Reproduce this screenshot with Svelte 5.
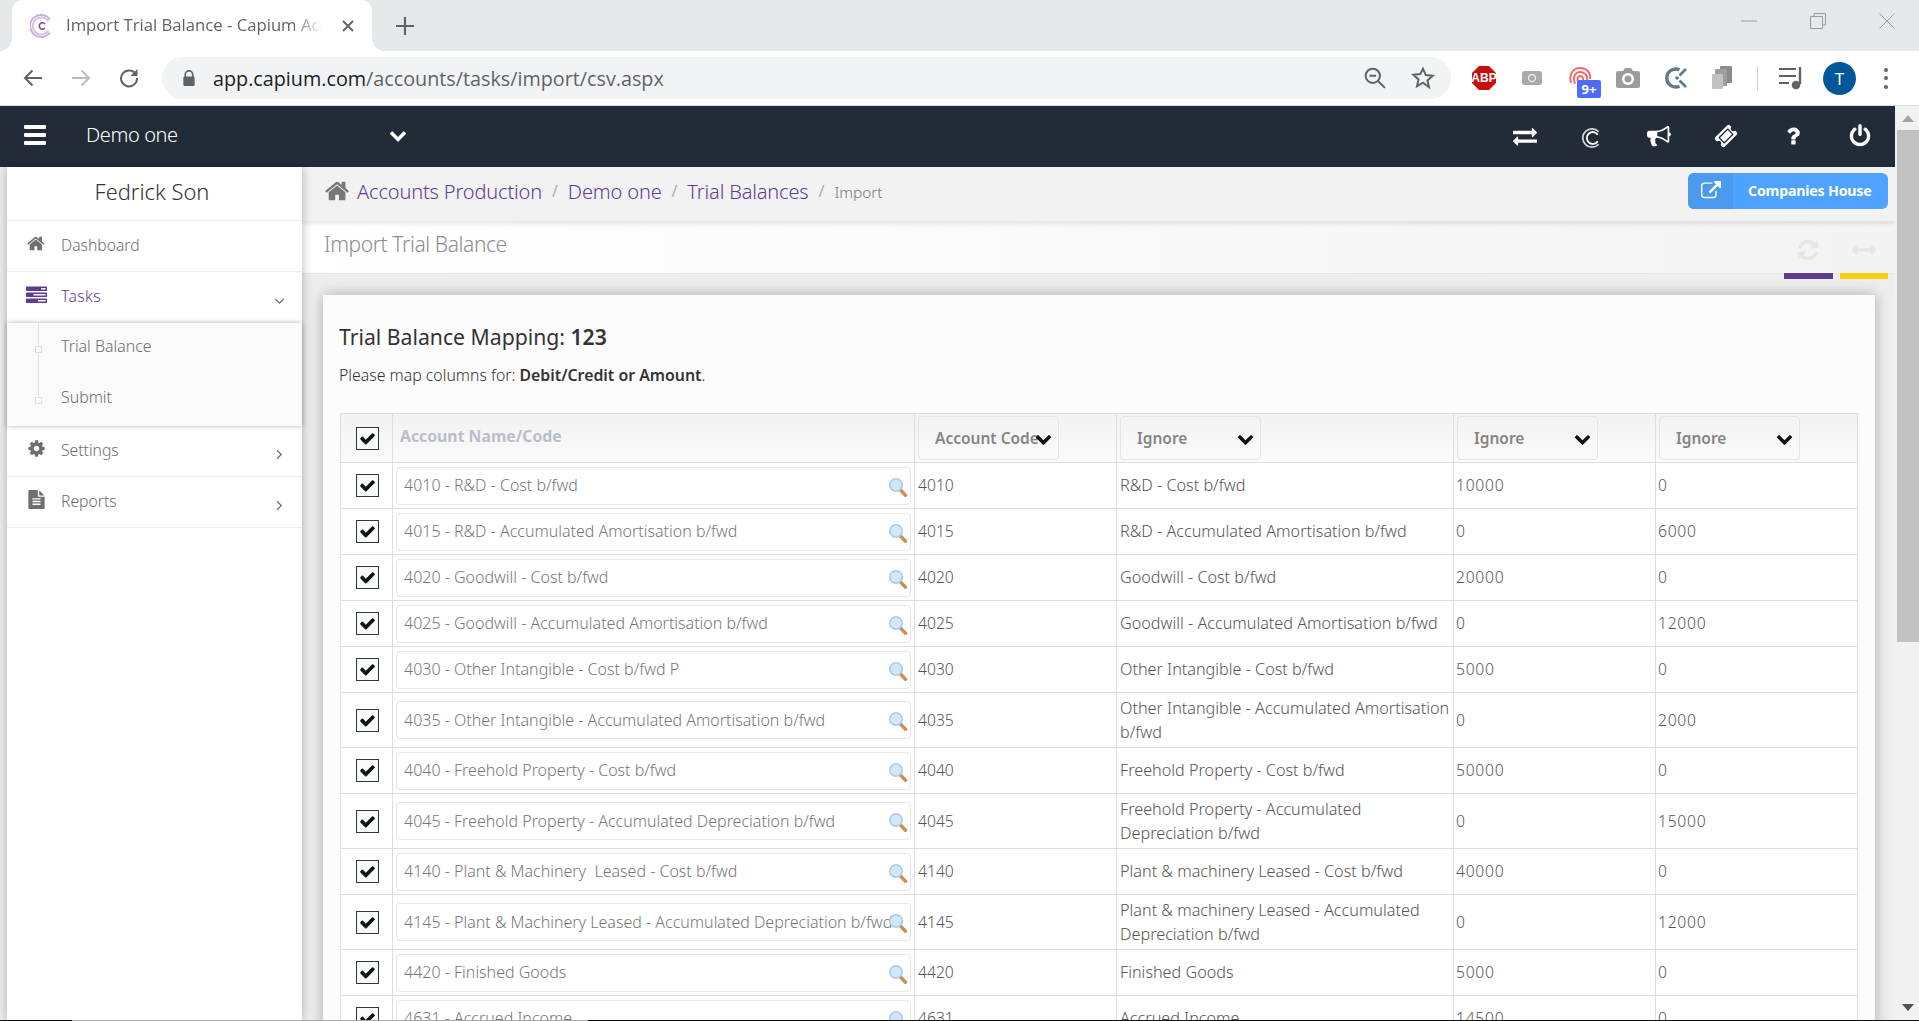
<script>
  const fa = {
    home: "M1408 992v480q0 26-19 45t-45 19h-384v-384h-256v384h-384q-26 0-45-19t-19-45v-480q0-1 .5-3t.5-3l575-474 575 474q1 2 1 6zm223-69l-62 74q-8 9-21 11h-3q-13 0-21-7l-692-577-692 577q-12 8-24 7-13-2-21-11l-62-74q-8-10-7-23.500t11-21.500l719-599q32-26 76-26t76 26l244 204v-195q0-14 9-23t23-9h192q14 0 23 9t9 23v408l219 182q10 8 11 21.500t-7 23.500z",
    cog: "M1152 896q0-106-75-181t-181-75-181 75-75 181 75 181 181 75 181-75 75-181zm512-109v222q0 12-8 23t-20 13l-185 28q-19 54-39 91 35 50 107 138 10 12 10 25t-9 23q-27 37-99 108t-94 71q-12 0-26-9l-138-108q-44 23-91 38-16 136-29 186-7 28-36 28h-222q-14 0-24.500-8.500t-11.500-21.500l-28-184q-49-16-90-37l-141 107q-10 9-25 9-14 0-25-11-126-114-165-168-7-10-7-23 0-12 8-23 15-21 51-66.500t54-70.500q-27-50-41-99l-183-27q-13-2-21-12.500t-8-23.500v-222q0-12 8-23t19-13l186-28q14-46 39-92-40-57-107-138-10-12-10-24 0-10 9-23 26-36 98.500-107.500t94.500-71.500q13 0 26 10l138 107q44-23 91-38 16-136 29-186 7-28 36-28h222q14 0 24.500 8.500t11.500 21.500l28 184q49 16 90 37l142-107q9-9 24-9 13 0 25 10 129 119 165 170 7 8 7 22 0 12-8 23-15 21-51 66.500t-54 70.500q26 50 41 98l183 28q13 2 21 12.500t8 23.500z",
    file: "M1596 476q14 14 28 36h-472v-472q22 14 36 28zm-476 164h544v1056q0 40-28 68t-68 28h-1344q-40 0-68-28t-28-68v-1600q0-40 28-68t68-28h800v544q0 40 28 68t68 28zm160 736v-64q0-14-9-23t-23-9h-704q-14 0-23 9t-9 23v64q0 14 9 23t23 9h704q14 0 23-9t9-23zm0-256v-64q0-14-9-23t-23-9h-704q-14 0-23 9t-9 23v64q0 14 9 23t23 9h704q14 0 23-9t9-23zm0-256v-64q0-14-9-23t-23-9h-704q-14 0-23 9t-9 23v64q0 14 9 23t23 9h704q14 0 23-9t9-23z",
    tasks: "M1024 1408h640v-128h-640v128zm-384-512h1024v-128h-1024v128zm640-512h384v-128h-384v128zm512 832v256q0 26-19 45t-45 19h-1664q-26 0-45-19t-19-45v-256q0-26 19-45t45-19h1664q26 0 45 19t19 45zm0-512v256q0 26-19 45t-45 19h-1664q-26 0-45-19t-19-45v-256q0-26 19-45t45-19h1664q26 0 45 19t19 45zm0-512v256q0 26-19 45t-45 19h-1664q-26 0-45-19t-19-45v-256q0-26 19-45t45-19h1664q26 0 45 19t19 45z",
    exchange: "M1792 1184v192q0 13-9.500 22.500t-22.500 9.500h-1376v192q0 13-9.500 22.500t-22.500 9.500q-12 0-24-10l-319-320q-9-9-9-22 0-14 9-23l320-320q9-9 23-9 13 0 22.500 9.500t9.500 22.500v192h1376q13 0 22.500 9.500t9.500 22.500zm0-544q0 14-9 23l-320 320q-9 9-23 9-13 0-22.500-9.500t-9.500-22.500v-192h-1376q-13 0-22.500-9.500t-9.500-22.500v-192q0-13 9.500-22.500t22.500-9.500h1376v-192q0-14 9-23t23-9q12 0 24 10l319 319q9 9 9 23z",
    bullhorn: "M1664 640q53 0 90.500 37.500t37.500 90.500-37.500 90.500-90.500 37.500v384q0 52-38 90t-90 38q-417-347-812-380-58 19-91 66t-31 100.500 40 92.500q-20 33-23 65.500t6 58 33.500 55 48 50 61.500 50.500q-29 58-111.500 83t-168.500 11.500-132-55.500q-7-23-29.500-87.500t-32-94.500-23-89-15-101 3.500-98.500 22-110.500h-122q-66 0-113-47t-47-113v-192q0-66 47-113t113-47h480q435 0 896-384 52 0 90 38t38 90v384zm-128 604v-954q-394 302-768 343v270q377 42 768 341z",
    ticket: "M1024 452l316 316-572 572-316-316zm-211 979l618-618q19-19 19-45t-19-45l-362-362q-18-18-45-18t-45 18l-618 618q-19 19-19 45t19 45l362 362q18 18 45 18t45-18zm889-637l-907 908q-37 37-90.500 37t-90.500-37l-126-126q56-56 56-136t-56-136-136-56-136 56l-125-126q-37-37-37-90.500t37-90.500l907-906q37-37 90.500-37t90.500 37l125 125q-56 56-56 136t56 136 136 56 136-56l126 125q37 37 37 90.500t-37 90.500z",
    question: "M1088 1256v240q0 16-12 28t-28 12h-240q-16 0-28-12t-12-28v-240q0-16 12-28t28-12h240q16 0 28 12t12 28zm316-600q0 54-15.500 101t-35 76.500-55 59.500-57.500 43.500-61 35.500q-41 23-68.500 65t-27.500 67q0 17-12 32.500t-28 15.500h-240q-15 0-25.500-18.500t-10.500-37.500v-45q0-83 65-156.500t143-108.500q59-27 84-56t25-76q0-42-46.500-74t-107.500-32q-65 0-108 29-35 25-107 115-13 16-31 16-12 0-25-8l-164-125q-13-10-15.500-25t5.500-28q160-266 464-266 80 0 161 31t146 83 106 127.500 41 158.500z",
    power: "M1664 896q0 156-61 298t-164 245-245 164-298 61-298-61-245-164-164-245-61-298q0-182 80.500-343t226.500-270q43-32 95.500-25t83.500 50q32 42 24.500 94.500t-49.500 84.500q-98 74-151.500 181t-53.500 228q0 104 40.500 198.500t109.500 163.500 163.500 109.500 198.500 40.500 198.500-40.500 163.500-109.500 109.500-163.500 40.500-198.500q0-121-53.500-228t-151.500-181q-42-32-49.500-84.500t24.500-94.500q31-43 84-50t95 25q146 109 226.500 270t80.500 343zm-640-768v640q0 52-38 90t-90 38-90-38-38-90v-640q0-52 38-90t90-38 90 38 38 90z",
    external: "M1408 928v320q0 119-84.500 203.500t-203.500 84.500h-832q-119 0-203.500-84.500t-84.500-203.500v-832q0-119 84.500-203.500t203.500-84.500h704q14 0 23 9t9 23v64q0 14-9 23t-23 9h-704q-66 0-113 47t-47 113v832q0 66 47 113t113 47h832q66 0 113-47t47-113v-320q0-14 9-23t23-9h64q14 0 23 9t9 23zm384-864v512q0 26-19 45t-45 19-45-19l-176-176-652 652q-10 10-23 10t-23-10l-114-114q-10-10-10-23t10-23l652-652-176-176q-19-19-19-45t19-45 45-19h512q26 0 45 19t19 45z",
    refresh: "M1639 1056q0 5-1 7-64 268-268 434.500t-478 166.500q-146 0-282.500-55t-243.500-157l-129 129q-19 19-45 19t-45-19-19-45v-448q0-26 19-45t45-19h448q26 0 45 19t19 45-19 45l-137 137q71 66 161 102t187 36q134 0 250-65t186-179q11-17 53-117 8-23 30-23h192q13 0 22.500 9.500t9.500 22.500zm25-800v448q0 26-19 45t-45 19h-448q-26 0-45-19t-19-45 19-45l138-138q-148-137-349-137-134 0-250 65t-186 179q-11 17-53 117-8 23-30 23h-199q-13 0-22.500-9.500t-9.500-22.500v-7q65-268 270-434.500t480-166.500q146 0 284 55.500t245 156.500l130-129q19-19 45-19t45 19 19 45z",
    arrowsH: "M1792 896q0 26-19 45l-256 256q-19 19-45 19t-45-19-19-45v-128h-1024v128q0 26-19 45t-45 19-45-19l-256-256q-19-19-19-45t19-45l256-256q19-19 45-19t45 19 19 45v128h1024v-128q0-26 19-45t45-19 45 19l256 256q19 19 19 45z",
    check: "M1671 566q0 40-28 68l-724 724-136 136q-28 28-68 28t-68-28l-136-136-362-362q-28-28-28-68t28-68l136-136q28-28 68-28t68 28l294 295 656-657q28-28 68-28t68 28l136 136q28 28 28 68z",
    chevron: "M1683 808l-742 741q-19 19-45 19t-45-19l-742-741q-19-19-19-45.500t19-45.500l166-165q19-19 45-19t45 19l531 531 531-531q19-19 45-19t45 19l166 165q19 19 19 45.500t-19 45.500z"
  };

  const navIcons = ["exchange", null, "bullhorn", "ticket", "question", "power"];

  const menuTop = [
    { label: "Dashboard", icon: "home" },
    { label: "Tasks", icon: "tasks", active: true, caret: "down" }
  ];
  const menuBottom = [
    { label: "Settings", icon: "cog", caret: "right" },
    { label: "Reports", icon: "file", caret: "right" }
  ];

  const rows = [
    { name: "4010 - R&D - Cost b/fwd", code: "4010", desc: "R&D - Cost b/fwd", a: "10000", b: "0" },
    { name: "4015 - R&D - Accumulated Amortisation b/fwd", code: "4015", desc: "R&D - Accumulated Amortisation b/fwd", a: "0", b: "6000" },
    { name: "4020 - Goodwill - Cost b/fwd", code: "4020", desc: "Goodwill - Cost b/fwd", a: "20000", b: "0" },
    { name: "4025 - Goodwill - Accumulated Amortisation b/fwd", code: "4025", desc: "Goodwill - Accumulated Amortisation b/fwd", a: "0", b: "12000" },
    { name: "4030 - Other Intangible - Cost b/fwd P", code: "4030", desc: "Other Intangible - Cost b/fwd", a: "5000", b: "0" },
    { name: "4035 - Other Intangible - Accumulated Amortisation b/fwd", code: "4035", desc: "Other Intangible - Accumulated Amortisation b/fwd", a: "0", b: "2000", tall: true },
    { name: "4040 - Freehold Property - Cost b/fwd", code: "4040", desc: "Freehold Property - Cost b/fwd", a: "50000", b: "0" },
    { name: "4045 - Freehold Property - Accumulated Depreciation b/fwd", code: "4045", desc: "Freehold Property - Accumulated Depreciation b/fwd", a: "0", b: "15000", tall: true },
    { name: "4140 - Plant & Machinery  Leased - Cost b/fwd", code: "4140", desc: "Plant & machinery Leased - Cost b/fwd", a: "40000", b: "0" },
    { name: "4145 - Plant & Machinery Leased - Accumulated Depreciation b/fwd", code: "4145", desc: "Plant & machinery Leased - Accumulated Depreciation b/fwd", a: "0", b: "12000", tall: true },
    { name: "4420 - Finished Goods", code: "4420", desc: "Finished Goods", a: "5000", b: "0" },
    { name: "4631 - Accrued Income", code: "4631", desc: "Accrued Income", a: "14500", b: "0" }
  ];
</script>

{#snippet icon(name, cls)}
  <svg class={cls} viewBox="0 0 1792 1792" fill="currentColor"><path d={fa[name]} /></svg>
{/snippet}

{#snippet lens()}
  <svg class="lens" viewBox="0 0 20 20">
    <path d="M11.500 12l6 6.200" stroke="#c98f55" stroke-width="3.400" stroke-linecap="round" />
    <circle cx="8" cy="8" r="7" fill="#a9cbee" />
    <circle cx="8" cy="8" r="5.400" fill="#d5e6f8" />
  </svg>
{/snippet}

{#snippet checkbox()}
  <span class="check">{@render icon("check", "check-mark")}</span>
{/snippet}

{#snippet select(label)}
  <div class="select">
    <span>{label}</span>
    {@render icon("chevron", "select-chev")}
  </div>
{/snippet}

{#snippet menuItem(item)}
  <div class="item" class:active={item.active}>
    {@render icon(item.icon, "item-icon")}
    <span class="item-label">{item.label}</span>
    {#if item.caret === "down"}
      <svg class="caret caret-down" viewBox="0 0 12 8"><path d="M1 1l5 5 5-5" fill="none" stroke="#666" stroke-width="1.300" /></svg>
    {:else if item.caret === "right"}
      <svg class="caret caret-right" viewBox="0 0 8 12"><path d="M1 1l5 5-5 5" fill="none" stroke="#666" stroke-width="1.300" /></svg>
    {/if}
  </div>
{/snippet}

<div class="app">
  <header class="tabstrip">
    <div class="tab">
      <svg class="favicon" viewBox="0 0 24 24" fill="none">
        <path d="M20 5.500A11 11 0 1 0 20 18.500" stroke="#cdb0da" stroke-width="2" />
        <path d="M18.500 7.500A8.500 8.500 0 1 0 18.500 16.500" stroke="#d7c2e1" stroke-width="2" />
        <path d="M15 10a3.200 3.200 0 1 0 0 4" stroke="#7b4a9e" stroke-width="1.600" />
      </svg>
      <span class="tab-title">Import Trial Balance - Capium Accounts</span>
      <svg class="tab-close" viewBox="0 0 12 12"><path d="M1 1l10 10M11 1L1 11" stroke="#5f6368" stroke-width="1.900" /></svg>
    </div>
    <svg class="newtab" viewBox="0 0 18 18"><path d="M9 0v18M0 9h18" stroke="#5f6368" stroke-width="2.200" /></svg>
    <div class="window-controls">
      <svg viewBox="0 0 16 16"><path d="M0 8h16" stroke="#9a9a9a" stroke-width="1" /></svg>
      <svg viewBox="0 0 16 16" fill="none"><path d="M4 3.500V.5h11.500V12H12.500M.5 3.500h12v12H.5z" stroke="#9a9a9a" stroke-width="1" /></svg>
      <svg viewBox="0 0 16 16"><path d="M.5.500l15 15M15.500.5l-15 15" stroke="#9a9a9a" stroke-width="1" /></svg>
    </div>
  </header>

  <div class="toolbar">
    <div class="tool">
      <svg viewBox="0 0 20 20" fill="none"><path d="M19 10H2M9.500 2.500L2 10l7.500 7.500" stroke="#5f6368" stroke-width="2" /></svg>
    </div>
    <div class="tool">
      <svg viewBox="0 0 20 20" fill="none"><path d="M1 10h17M10.500 2.500L18 10l-7.500 7.500" stroke="#b9bbbe" stroke-width="2" /></svg>
    </div>
    <div class="tool">
      <svg viewBox="0 0 20 20" fill="none"><path d="M17 6.500A8 8 0 1 0 18 10" stroke="#5f6368" stroke-width="2" /><path d="M18.500 1v7h-7z" fill="#5f6368" /></svg>
    </div>
    <div class="omnibox">
      <svg class="lock" viewBox="0 0 14 18"><path d="M3 8V5a4 4 0 0 1 8 0v3" fill="none" stroke="#5f6368" stroke-width="1.800" /><rect x="1" y="7" width="12" height="10" rx="1.500" fill="#5f6368" /></svg>
      <span class="url"><b>app.capium.com</b>/accounts/tasks/import/csv.aspx</span>
      <svg class="omni-zoom" viewBox="0 0 20 20" fill="none"><circle cx="8" cy="8" r="6.500" stroke="#5f6368" stroke-width="1.800" /><path d="M5 8h6M13 13l6 6" stroke="#5f6368" stroke-width="1.800" /></svg>
      <svg class="omni-star" viewBox="0 0 24 24" fill="none"><path d="M12 2.800l2.800 6.300 6.900.7-5.200 4.600 1.500 6.800L12 16.700l-6 3.500 1.500-6.800-5.200-4.600 6.900-.7z" stroke="#5f6368" stroke-width="2" /></svg>
    </div>
    <div class="extensions">
      <div class="ext">
        <svg viewBox="0 0 24 24"><path d="M7 0h10l7 7v10l-7 7H7l-7-7V7z" fill="#c70d0d" /></svg>
        <span class="abp">ABP</span>
      </div>
      <div class="ext">
        <svg viewBox="-2 -2 24 24"><rect x="0" y="3" width="20" height="14" rx="3" fill="#a9a9a9" /><circle cx="10" cy="10" r="3.500" fill="none" stroke="#eee" stroke-width="1.300" /></svg>
      </div>
      <div class="ext">
        <svg viewBox="0 0 24 24" fill="none" stroke="#f86a6a" stroke-width="2"><path d="M3 17C.5 9 5 2 12 2s11 5 10 11" /><path d="M7 18C4 10 8 6 12 6s8 3 7 8" /><path d="M11 19c-3-6-1-9 1-9s4 2 3 6" /></svg>
        <span class="badge">9+</span>
      </div>
      <div class="ext">
        <svg viewBox="0 0 24 24"><path d="M2 5h5l2-3h6l2 3h5a2 2 0 0 1 2 2v13a2 2 0 0 1-2 2H2a2 2 0 0 1-2-2V7a2 2 0 0 1 2-2z" fill="#9b9b9b" /><circle cx="12" cy="13" r="6" fill="#fff" /><circle cx="12" cy="13" r="3.500" fill="#9b9b9b" /></svg>
      </div>
      <div class="ext">
        <svg viewBox="0 0 24 24" fill="none" stroke="#5f7a86" stroke-width="3.400"><path d="M15.500 3.800A9 9 0 1 0 15.500 20.200" /><path d="M22 3l-6.500 6.500M22 21l-6.500-6.500" stroke-width="2.600" /><circle cx="13" cy="12" r="1.800" fill="#5f7a86" stroke="none" /></svg>
      </div>
      <div class="ext">
        <svg viewBox="0 0 24 24"><rect x="8" y="0" width="12" height="17" rx="1" fill="#8a8a8a" /><rect x="3" y="3" width="12" height="17" rx="1" fill="#9e9e9e" /><rect x="0" y="8" width="11" height="15" rx="1" fill="#c2c2c2" /></svg>
      </div>
      <span class="divider"></span>
      <div class="ext playlist">
        <svg viewBox="0 0 24 24" fill="none"><path d="M0 3h17M0 10h17M0 17h10" stroke="#5f6368" stroke-width="2" /><path d="M21 1v17" stroke="#5f6368" stroke-width="2.400" /><circle cx="17" cy="19" r="4.300" fill="#5f6368" /></svg>
      </div>
      <div class="avatar">T</div>
      <div class="dots"><i></i><i></i><i></i></div>
    </div>
  </div>

  <nav class="topnav">
    <div class="burger"><i></i><i></i><i></i></div>
    <span class="company">Demo one</span>
    {@render icon("chevron", "company-chev")}
    <div class="nav-actions">
      {#each navIcons as n}
        <div class="nav-action">
          {#if n}
            {@render icon(n, "nav-icon")}
          {:else}
            <svg class="nav-c" viewBox="0 0 24 24" fill="none">
              <path d="M20 4.500A11 11 0 1 0 20 19.500" stroke="#d8d8d8" stroke-width="2" />
              <path d="M19 8A7.200 7.200 0 1 0 19 16" stroke="#fff" stroke-width="2.200" />
            </svg>
          {/if}
        </div>
      {/each}
    </div>
  </nav>

  <div class="body">
    <aside class="sidebar">
      <div class="user">Fedrick Son</div>
      {#each menuTop as item}
        {@render menuItem(item)}
      {/each}
      <div class="submenu">
        <div class="sub-item"><i class="node"></i>Trial Balance</div>
        <div class="sub-item"><i class="node"></i>Submit</div>
      </div>
      {#each menuBottom as item}
        {@render menuItem(item)}
      {/each}
    </aside>

    <main class="main">
      <div class="crumbs">
        {@render icon("home", "crumb-home")}
        <a href="#a">Accounts Production</a><span class="sep">/</span>
        <a href="#b">Demo one</a><span class="sep">/</span>
        <a href="#c">Trial Balances</a><span class="sep">/</span>
        <span class="here">Import</span>
        <div class="ch-btn">
          <span class="ch-icon">{@render icon("external", "ch-svg")}</span>
          <span class="ch-label">Companies House</span>
        </div>
      </div>

      <div class="titlebar">
        <h1>Import Trial Balance</h1>
        <div class="tools">
          <div class="tool-slot slot-purple">{@render icon("refresh", "tool-icon")}</div>
          <div class="tool-slot slot-yellow">{@render icon("arrowsH", "tool-icon")}</div>
        </div>
      </div>

      <section class="card">
        <h2>Trial Balance Mapping: <b>123</b></h2>
        <p>Please map columns for: <b>Debit/Credit or Amount</b>.</p>
        <table>
          <colgroup>
            <col class="c1" /><col class="c2" /><col class="c3" /><col class="c4" /><col class="c5" /><col class="c6" />
          </colgroup>
          <thead>
            <tr>
              <th class="center">{@render checkbox()}</th>
              <th class="th-name"><span>Account Name/Code</span></th>
              <th>{@render select("Account Code")}</th>
              <th>{@render select("Ignore")}</th>
              <th>{@render select("Ignore")}</th>
              <th>{@render select("Ignore")}</th>
            </tr>
          </thead>
          <tbody>
            {#each rows as r}
              <tr class:tall={r.tall}>
                <td class="center">{@render checkbox()}</td>
                <td class="td-input">
                  <div class="name-input"><span>{r.name}</span>{@render lens()}</div>
                </td>
                <td class="num code">{r.code}</td>
                <td class="desc">{r.desc}</td>
                <td class="num amount">{r.a}</td>
                <td class="num amount">{r.b}</td>
              </tr>
            {/each}
          </tbody>
        </table>
      </section>
    </main>
  </div>

  <div class="scrollbar">
    <svg class="arrow-up" viewBox="0 0 12 7"><path d="M0 7h12L6 0z" fill="#a3a3a3" /></svg>
    <div class="thumb"></div>
    <svg class="arrow-down" viewBox="0 0 12 7"><path d="M0 0h12L6 7z" fill="#505050" /></svg>
  </div>
  <div class="bottom-edge"></div>
</div>

<style>
  :global(body) {
    margin: 0;
    background: #eee;
  }
  .app {
    position: relative;
    width: 1919px;
    height: 1021px;
    overflow: hidden;
    font-family: "Noto Sans", "Open Sans", sans-serif;
    color: #444;
  }
  svg { display: block; flex: none; }

  /* Browser chrome */
  .tabstrip {
    height: 51px;
    background: #e6e9ec;
    display: flex;
    align-items: center;
    padding-left: 12px;
  }
  .tab {
    position: relative;
    width: 360px;
    height: 51px;
    box-sizing: border-box;
    background: #fff;
    border-radius: 11px 11px 0 0;
    display: flex;
    align-items: center;
    padding: 0 18px;
  }
  .tab::before, .tab::after {
    content: "";
    position: absolute;
    bottom: 0;
    width: 12px;
    height: 12px;
  }
  .tab::before {
    left: -12px;
    background: radial-gradient(circle at 0 0, #e6e9ec 11.500px, #fff 12px);
  }
  .tab::after {
    right: -12px;
    background: radial-gradient(circle at 100% 0, #e6e9ec 11.500px, #fff 12px);
  }
  .favicon { width: 24px; height: 24px; }
  .tab-title {
    margin-left: 12px;
    width: 264px;
    white-space: nowrap;
    overflow: hidden;
    font-family: "Open Sans", sans-serif;
    font-size: 16.700px;
    line-height: 24px;
    padding-bottom: 2px;
    color: #5f6368;
    -webkit-mask-image: linear-gradient(90deg, #000 86%, transparent 97%);
    mask-image: linear-gradient(90deg, #000 86%, transparent 97%);
  }
  .tab-close { width: 12px; height: 12px; margin-left: 12px; }
  .newtab { width: 18px; height: 18px; margin-left: 24px; }
  .window-controls {
    margin-left: auto;
    display: flex;
    gap: 53px;
    padding-right: 24px;
    padding-bottom: 10px;
  }
  .window-controls svg { width: 16px; height: 16px; }

  .toolbar {
    height: 54px;
    background: #fff;
    border-bottom: 1px solid #dadce0;
    display: flex;
    align-items: center;
    padding-left: 9px;
  }
  .tool {
    width: 48px;
    height: 48px;
    display: flex;
    align-items: center;
    justify-content: center;
  }
  .tool svg { width: 20px; height: 20px; }
  .omnibox {
    margin-left: 9px;
    width: 1289px;
    height: 42px;
    border-radius: 21px;
    background: #f1f3f4;
    display: flex;
    align-items: center;
    padding: 0 16px 0 20px;
    box-sizing: border-box;
  }
  .lock { width: 14px; height: 17px; }
  .url {
    margin-left: 17px;
    font-family: "Open Sans", sans-serif;
    font-size: 19.750px;
    line-height: 26px;
    padding-top: 1px;
    color: #5f6368;
    white-space: nowrap;
  }
  .url b { font-weight: 400; color: #202124; }
  .omni-zoom { width: 22px; height: 22px; margin-left: auto; }
  .omni-star { width: 24px; height: 24px; margin-left: 25px; }
  .extensions { display: flex; align-items: center; margin-left: 9px; }
  .ext {
    position: relative;
    width: 48px;
    height: 48px;
    display: flex;
    align-items: center;
    justify-content: center;
  }
  .ext svg { width: 24px; height: 24px; }
  .abp {
    position: absolute;
    inset: 0;
    display: flex;
    align-items: center;
    justify-content: center;
    font-family: "Liberation Sans", sans-serif;
    font-size: 12px;
    font-weight: 700;
    color: #fff;
  }
  .badge {
    position: absolute;
    left: 21px;
    top: 26px;
    width: 24px;
    height: 18px;
    border-radius: 2px;
    background: #4e6cf5;
    color: #fff;
    font-size: 13px;
    font-weight: 700;
    line-height: 18px;
    text-align: center;
  }
  .divider {
    width: 1px;
    height: 25px;
    background: #cfcfcf;
    margin-left: 9px;
  }
  .playlist { margin-left: 9px; }
  .avatar {
    width: 33px;
    height: 33px;
    border-radius: 50%;
    background: #01579b;
    color: #fff;
    font-size: 17px;
    line-height: 33px;
    text-align: center;
    margin-left: 8px;
  }
  .dots {
    margin-left: 28px;
    display: flex;
    flex-direction: column;
    gap: 4.500px;
  }
  .dots i {
    width: 4px;
    height: 4px;
    border-radius: 50%;
    background: #5f6368;
    display: block;
  }

  /* App nav */
  .topnav {
    width: 1895px;
    height: 61px;
    background: #222b38;
    display: flex;
    align-items: center;
    color: #fff;
    padding: 0 0 4px 24px;
    box-sizing: border-box;
  }
  .burger { width: 22px; display: flex; flex-direction: column; gap: 4px; }
  .burger i { height: 4px; background: #fff; border-radius: 1px; display: block; }
  .company {
    margin-left: 40px;
    font-size: 20px;
    font-weight: 300;
    width: 300px;
    letter-spacing: -0.400px;
  }
  :global(.company-chev) { width: 18px; height: 18px; margin-left: 3px; }
  .nav-actions { margin-left: auto; display: flex; margin-right: 1.500px; }
  .nav-action {
    width: 67px;
    height: 57px;
    display: flex;
    align-items: center;
    justify-content: center;
  }
  :global(.nav-icon) { width: 24px; height: 24px; margin-top: 2px; }
  .nav-c { width: 20px; height: 20px; margin-top: 6px; }

  /* Page body */
  .body { display: flex; height: 854px; }
  .sidebar {
    width: 295px;
    margin-left: 7px;
    background: #fff;
    box-shadow: 0 0 10px rgba(0,0,0,.28);
    position: relative;
    z-index: 2;
    flex: none;
    color: #6e6e6e;
    font-weight: 300;
  }
  .user {
    height: 54px;
    box-sizing: border-box;
    border-bottom: 1px solid #eee;
    text-align: center;
    line-height: 50px;
    font-size: 21.900px;
    color: #333;
    padding-right: 5px;
  }
  .item {
    height: 51px;
    box-sizing: border-box;
    border-bottom: 1px solid #eee;
    display: flex;
    align-items: center;
    padding-left: 20px;
    position: relative;
    font-size: 15.700px;
  }
  .item.active { color: #5f3c94; border-bottom: 0; }
  :global(.item-icon) { width: 19px; height: 19px; margin-top: -5px; color: #6f6f6f; }
  .active :global(.item-icon) { color: #5f3c94; width: 21px; height: 21px; margin-left: -1px; }
  .item-label { margin-left: 15px; margin-top: -3px; }
  .active .item-label { margin-left: 14px; letter-spacing: 0.400px; }
  .caret { position: absolute; }
  .caret-down { width: 11px; height: 7px; right: 17px; top: 26px; }
  .caret-right { width: 7px; height: 11px; right: 19px; top: 23px; }
  .submenu {
    height: 103px;
    background: #fafafa;
    box-shadow: 0 0 5px rgba(0,0,0,.3);
    position: relative;
    font-size: 15.900px;
  }
  .submenu::before {
    content: "";
    position: absolute;
    left: 31px;
    top: 0;
    height: 78px;
    border-left: 1px solid #e3e3e3;
  }
  .sub-item {
    height: 51px;
    padding-left: 54px;
    line-height: 46px;
    position: relative;
  }
  .node {
    position: absolute;
    left: 28px;
    top: 23px;
    width: 5px;
    height: 5px;
    border: 1px solid #e0e0e0;
    background: #fafafa;
  }

  .main { width: 1593px; flex: none; background: #eee; }
  .crumbs {
    height: 54px;
    box-sizing: border-box;
    background: #f2f2f2;
    box-shadow: 0 2px 5px rgba(0,0,0,.12);
    display: flex;
    align-items: center;
    padding: 0 7px 6px 23px;
    position: relative;
    z-index: 1;
    font-size: 20px;
    letter-spacing: -0.150px;
  }
  :global(.crumb-home) { width: 26px; height: 26px; color: #777; margin-right: 6px; }
  .crumbs a { color: #5f3c94; text-decoration: none; font-weight: 300; }
  .sep { color: #aaa; margin: 0 10px; font-size: 16px; }
  .here { font-size: 15.400px; color: #777; letter-spacing: 0; margin-top: 2px; font-weight: 300; }
  .ch-btn {
    margin-left: auto;
    width: 200px;
    height: 36px;
    border-radius: 6px;
    background: #4da3ff;
    color: #fff;
    display: flex;
    align-items: center;
  }
  .ch-icon {
    width: 45px;
    height: 36px;
    background: #4a9aef;
    border-radius: 6px 0 0 6px;
    display: flex;
    align-items: center;
    justify-content: center;
  }
  :global(.ch-svg) { width: 20px; height: 20px; }
  .ch-label {
    margin-left: 15px;
    margin-top: -2px;
    font-size: 14.200px;
    font-weight: 700;
    letter-spacing: -0.200px;
  }

  .titlebar {
    height: 53px;
    box-sizing: border-box;
    background: linear-gradient(90deg, #fff, #f3f3f3);
    border-bottom: 1px solid #e5e5e5;
    display: flex;
    align-items: center;
    padding-left: 22px;
  }
  h1 {
    margin: -6px 0 0;
    font-size: 21px;
    font-weight: 300;
    color: #8d8d8d;
    letter-spacing: -0.400px;
  }
  .tools { margin-left: auto; display: flex; gap: 7px; padding-right: 7px; align-self: stretch; }
  .tool-slot {
    position: relative;
    width: 49px;
    display: flex;
    align-items: center;
    justify-content: center;
    color: #e6e6e6;
  }
  .slot-yellow { width: 48px; }
  .tool-slot::after {
    content: "";
    position: absolute;
    left: 0;
    right: 0;
    bottom: -6px;
    height: 6px;
  }
  .slot-purple::after { background: #5f3c94; }
  .slot-yellow::after { background: #ffcc0f; }
  :global(.tool-icon) { width: 24px; height: 24px; margin-top: 6px; margin-left: -1px; }

  .card {
    margin: 21px 20px 0 21px;
    height: 760px;
    padding: 28px 17px 0;
    box-sizing: border-box;
    background: #fcfcfc;
    box-shadow: 0 0 14px rgba(0,0,0,.28);
  }
  h2 {
    margin: 0 0 0 -1px;
    font-size: 21.200px;
    line-height: 28px;
    font-weight: 400;
    color: #333;
  }
  h2 b { font-weight: 600; }
  .card p {
    margin: 13px 0 0 -1px;
    font-size: 15.850px;
    line-height: 22px;
    font-weight: 300;
    color: #333;
  }
  .card p b { font-weight: 600; color: #333; }
  table {
    margin-top: 27px;
    width: 1517px;
    table-layout: fixed;
    border-collapse: collapse;
    background: #fff;
    font-size: 16.200px;
    line-height: 24.500px;
    color: #555;
    font-weight: 300;
  }
  .c1 { width: 52px; }
  .c2 { width: 522px; }
  .c3 { width: 202px; }
  .c4 { width: 337px; }
  .c5 { width: 202px; }
  .c6 { width: 202px; }
  th, td {
    border: 1px solid #dedede;
    padding: 0 0 0 3px;
    text-align: left;
  }
  thead tr {
    height: 49px;
    background: linear-gradient(180deg, #f2f2f2, #fbfbfb);
  }
  th { font-weight: 400; }
  tbody tr { height: 46px; }
  tbody tr.tall { height: 55px; }
  td.center, th.center { padding: 0; }
  .num.code { letter-spacing: 0; font-size: 15.700px; }
  .num.amount { letter-spacing: 0.700px; padding-left: 2px; font-size: 15.700px; }
  .check {
    display: flex;
    align-items: center;
    justify-content: center;
    width: 21px;
    height: 21px;
    margin: 0 auto;
    border: 1.500px solid #2f3640;
    background: #f8f9fb;
    color: #111;
    position: relative;
    left: 1px;
  }
  :global(.check-mark) { width: 17px; height: 17px; }
  th.th-name {
    padding-left: 7px;
    font-weight: 700;
    color: #b9bfca;
    font-size: 15.800px;
  }
  .th-name span { display: block; margin-top: -3px; }
  .select {
    position: relative;
    width: 141px;
    height: 44px;
    box-sizing: border-box;
    border: 1px solid #e4e4e4;
    border-radius: 4px;
    display: flex;
    align-items: center;
    padding-left: 16px;
    color: #858585;
    font-weight: 600;
    font-size: 15.500px;
    white-space: nowrap;
  }
  :global(.select-chev) {
    position: absolute;
    right: 6px;
    top: 13px;
    width: 17px;
    height: 17px;
    color: #111;
  }
  .td-input { padding-left: 3px; }
  .name-input {
    position: relative;
    width: 515px;
    height: 38px;
    box-sizing: border-box;
    border: 1px solid #e6e6e6;
    border-radius: 4px;
    background: #fff;
    display: flex;
    align-items: center;
    padding-left: 7px;
    color: #777;
    font-size: 16px;
    white-space: pre;
  }
  .lens { position: absolute; right: 2px; top: 9px; width: 20px; height: 20px; }

  /* Page scrollbar overlays the page's right edge */
  .scrollbar {
    position: absolute;
    top: 106px;
    right: 0;
    bottom: 0;
    width: 24px;
    background: #f1f1f1;
    z-index: 3;
  }
  .thumb {
    margin: 24px 0 0 2px;
    height: 512px;
    background: #c1c1c1;
  }
  .arrow-down { position: absolute; left: 7px; bottom: 10px; width: 12px; height: 7px; }
  .arrow-up { position: absolute; left: 7px; top: 9px; width: 12px; height: 7px; }
  .bottom-edge {
    position: absolute;
    left: 0;
    right: 0;
    bottom: 0;
    height: 1px;
    background: linear-gradient(90deg, #111 72px, #aaa 72px, #aaa 588px, #111 588px);
    z-index: 4;
  }
</style>
